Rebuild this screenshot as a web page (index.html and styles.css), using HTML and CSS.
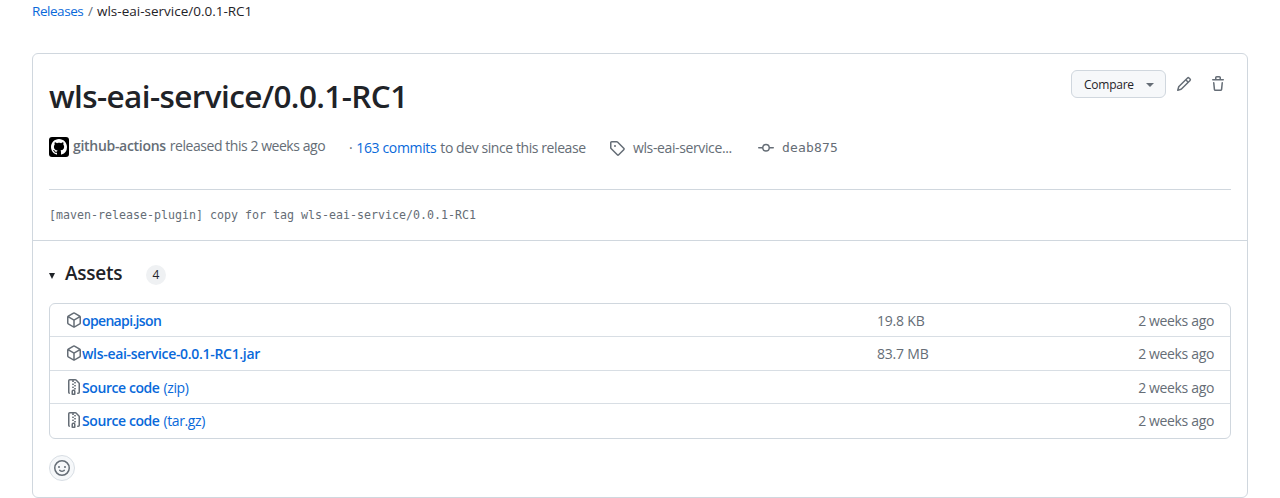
FILE: index.html
```html
<!DOCTYPE html>
<html lang="en">
<head>
<meta charset="utf-8">
<title>Release wls-eai-service/0.0.1-RC1</title>
<link rel="stylesheet" href="styles.css">
</head>
<body>
<svg width="0" height="0" class="sprite">
  <symbol id="package" viewBox="0 0 16 16"><path fill-rule="evenodd" d="M8.878.392a1.75 1.75 0 00-1.756 0l-5.25 3.045A1.75 1.75 0 001 4.951v6.098c0 .624.332 1.2.872 1.514l5.25 3.045a1.75 1.75 0 001.756 0l5.25-3.045c.54-.313.872-.89.872-1.514V4.951c0-.624-.332-1.2-.872-1.514L8.878.392zM7.875 1.69a.25.25 0 01.25 0l4.63 2.685L8 7.133 3.245 4.375l4.63-2.685zM2.5 5.677v5.372c0 .09.047.171.125.216l4.625 2.683V8.432L2.5 5.677zm6.25 8.271l4.625-2.683a.25.25 0 00.125-.216V5.677L8.75 8.432v5.516z"/></symbol>
  <symbol id="zip" viewBox="0 0 16 16"><path fill-rule="evenodd" d="M3.5 1.75a.25.25 0 01.25-.25h3a.75.75 0 000 1.5h.5a.75.75 0 000-1.5h2.086a.25.25 0 01.177.073l2.914 2.914a.25.25 0 01.073.177v8.586a.25.25 0 01-.25.25h-.5a.75.75 0 000 1.5h.5A1.75 1.75 0 0014 13.25V4.664c0-.464-.184-.909-.513-1.237L10.573.513A1.75 1.75 0 009.336 0H3.75A1.75 1.75 0 002 1.75v11.5c0 .649.353 1.214.874 1.515a.75.75 0 10.752-1.298.25.25 0 01-.126-.217V1.75zM8.75 3a.75.75 0 000 1.5h.5a.75.75 0 000-1.5h-.5zM6 5.250a.75.75 0 01.75-.75h.5a.75.75 0 010 1.5h-.5A.75.75 0 016 5.250zm2 1.500A.75.75 0 018.750 6h.5a.75.75 0 010 1.500h-.5A.75.75 0 018 6.750zm-1.250.750a.75.75 0 000 1.500h.5a.75.75 0 000-1.500h-.5zM8 9.750A.75.75 0 018.750 9h.5a.75.75 0 010 1.500h-.5A.75.75 0 018 9.750zm-.750.750a1.750 1.750 0 00-1.750 1.750v3c0 .414.336.750.750.750h2.500a.75.75 0 00.750-.750v-3a1.750 1.750 0 00-1.750-1.750h-.5zM7 12.250a.25.25 0 01.250-.250h.5a.25.25 0 01.250.250v2.250H7v-2.250z"/></symbol>
</svg>

<nav class="crumbs"><a class="link releases" href="#">Releases</a><span class="slash">/</span><span class="here">wls-eai-service/0.0.1-RC1</span></nav>

<main class="card">
  <section class="summary">
    <header class="head">
      <h1 class="title">wls-eai-service/0.0.1-RC1</h1>
      <div class="actions">
        <button class="compare"><span>Compare</span><i class="caret"></i></button>
        <svg class="icon pencil" viewBox="0 0 16 16"><path fill-rule="evenodd" d="M11.013 1.427a1.75 1.75 0 012.474 0l1.086 1.086a1.75 1.75 0 010 2.474l-8.610 8.610c-.210.210-.470.364-.756.445l-3.251.930a.75.75 0 01-.927-.928l.929-3.250a1.750 1.750 0 01.445-.758l8.610-8.610zm1.414 1.060a.25.25 0 00-.354 0L10.811 3.750l1.439 1.440 1.263-1.263a.25.25 0 000-.354l-1.086-1.086zM11.189 6.250L9.750 4.810l-6.286 6.287a.25.25 0 00-.064.108l-.558 1.953 1.953-.558a.249.249 0 00.108-.064l6.286-6.286z"/></svg>
        <svg class="icon trash" viewBox="0 0 16 16"><path fill-rule="evenodd" d="M6.500 1.750a.25.25 0 01.250-.250h2.500a.25.25 0 01.250.250V3h-3V1.750zm4.500 0V3h2.250a.75.75 0 010 1.500H2.750a.75.75 0 010-1.500H5V1.750C5 .784 5.784 0 6.750 0h2.500C10.216 0 11 .784 11 1.750zM4.496 6.675a.75.75 0 10-1.492.150l.660 6.600A1.750 1.750 0 005.405 15h5.190c.900 0 1.652-.681 1.741-1.576l.660-6.600a.75.75 0 00-1.492-.149l-.660 6.600a.25.25 0 01-.249.225h-5.190a.25.25 0 01-.249-.225l-.660-6.600z"/></svg>
      </div>
    </header>
    <div class="meta">
      <div class="author">
        <svg class="avatar" viewBox="0 0 20 20"><rect width="20" height="20" rx="3"/><path fill="#fff" transform="translate(2 2)" d="M8 0C3.580 0 0 3.580 0 8c0 3.540 2.290 6.530 5.470 7.590.400.070.550-.170.550-.380 0-.190-.010-.820-.010-1.490-2.010.370-2.530-.490-2.690-.940-.090-.230-.480-.940-.820-1.130-.280-.150-.680-.520-.010-.530.630-.010 1.080.580 1.230.820.720 1.210 1.870.870 2.330.660.070-.520.280-.870.510-1.070-1.780-.200-3.640-.890-3.640-3.950 0-.870.310-1.590.820-2.150-.080-.200-.360-1.020.080-2.120 0 0 .670-.210 2.200.820.640-.180 1.320-.270 2-.270.680 0 1.360.090 2 .270 1.530-1.040 2.200-.820 2.200-.820.440 1.100.160 1.920.080 2.120.510.560.820 1.270.820 2.150 0 3.070-1.870 3.750-3.650 3.950.290.250.540.730.540 1.480 0 1.070-.010 1.930-.010 2.200 0 .210.150.460.550.380A8.013 8.013 0 0016 8c0-4.420-3.580-8-8-8z"/></svg>
        <b class="who">github-actions</b><span class="when">released this 2 weeks ago</span>
      </div>
      <div class="since"><span class="dot">·</span><a class="link commits" href="#">163 commits</a><span class="todev">to dev since this release</span></div>
      <div class="tag"><svg class="icon" viewBox="0 0 16 16"><path fill-rule="evenodd" d="M2.500 7.775V2.750a.25.25 0 01.250-.250h5.025a.25.25 0 01.177.073l6.250 6.250a.25.25 0 010 .354l-5.025 5.025a.25.25 0 01-.354 0l-6.250-6.250a.25.25 0 01-.073-.177zm-1.500 0V2.750C1 1.784 1.784 1 2.750 1h5.025c.464 0 .910.184 1.238.513l6.250 6.250a1.750 1.750 0 010 2.474l-5.026 5.026a1.750 1.750 0 01-2.474 0l-6.250-6.250A1.750 1.750 0 011 7.775zM6 5a1 1 0 100 2 1 1 0 000-2z"/></svg><span class="tagname">wls-eai-service...</span></div>
      <div class="sha"><svg class="icon" viewBox="0 0 16 16"><path fill-rule="evenodd" d="M10.500 7.750a2.500 2.500 0 11-5 0 2.500 2.500 0 015 0zm1.430.750a4.002 4.002 0 01-7.860 0H.750a.75.75 0 110-1.500h3.320a4.001 4.001 0 017.860 0h3.320a.75.75 0 110 1.500h-3.320z"/></svg><code class="hash">deab875</code></div>
    </div>
    <pre class="notes">[maven-release-plugin] copy for tag wls-eai-service/0.0.1-RC1</pre>
  </section>

  <section class="assets">
    <div class="assets-head"><i class="triangle"></i><h2 class="assets-title">Assets</h2><span class="count">4</span></div>
    <ul class="list">
      <li class="row"><svg class="icon"><use href="#package"/></svg><a class="link name" href="#"><b class="n1">openapi.json</b></a><span class="size">19.8 KB</span><span class="age">2 weeks ago</span></li>
      <li class="row tall"><svg class="icon"><use href="#package"/></svg><a class="link name" href="#"><b class="n2">wls-eai-service-0.0.1-RC1.jar</b></a><span class="size">83.7 MB</span><span class="age">2 weeks ago</span></li>
      <li class="row"><svg class="icon"><use href="#zip"/></svg><a class="link name" href="#"><b class="n3">Source code</b><span class="ext">(zip)</span></a><span class="age">2 weeks ago</span></li>
      <li class="row tall"><svg class="icon"><use href="#zip"/></svg><a class="link name" href="#"><b class="n3">Source code</b><span class="ext">(tar.gz)</span></a><span class="age">2 weeks ago</span></li>
    </ul>
    <button class="react"><svg class="icon" viewBox="0 0 16 16"><path fill-rule="evenodd" d="M1.500 8a6.500 6.500 0 1113 0 6.500 6.500 0 01-13 0zM8 0a8 8 0 100 16A8 8 0 008 0zM5 8a1 1 0 100-2 1 1 0 000 2zm7-1a1 1 0 11-2 0 1 1 0 012 0zM5.320 9.636a.75.75 0 011.038.175l.007.009c.103.118.220.222.350.310.264.178.683.370 1.285.370.602 0 1.020-.192 1.285-.371.130-.088.247-.192.350-.310l.007-.008a.75.75 0 111.222.870l-.614-.431c.614.430.614.431.613.431v.001l-.001.002-.002.003-.005.007-.014.019a1.984 1.984 0 01-.184.213c-.160.166-.338.316-.530.445-.630.418-1.370.638-2.127.629-.946 0-1.652-.308-2.126-.630a3.320 3.320 0 01-.715-.657l-.014-.020-.005-.006-.002-.003v-.002h-.001l.613-.432-.614.430a.75.75 0 01.183-1.044z"/></svg></button>
  </section>
</main>
</body>
</html>
```
FILE: styles.css
```css
* { box-sizing: border-box; }

body {
  margin: 0;
  padding: 0 32px;
  height: 498px;
  overflow: hidden;
  background: #fff;
  color: #1f2328;
  font: 14px/20px "Open Sans", "Noto Sans", sans-serif;
}

b { font-weight: 600; }
button { font: inherit; color: inherit; padding: 0; }
.sprite { display: block; height: 0; }
.link { color: #0969da; text-decoration: none; }
.icon { width: 16px; height: 16px; flex: none; fill: #656d76; }

.crumbs {
  display: flex;
  height: 53px;
  padding-top: 1px;
  font-size: 13.5px;
  white-space: nowrap;
}
.releases { width: 51px; letter-spacing: -.45px; }
.slash { color: #656d76; width: 5px; margin: 0 4px 0 5px; }

.card {
  height: 445px;
  border: 1px solid #d0d7de;
  border-radius: 6px;
}

.summary {
  height: 187px;
  padding: 16px 16px 0;
  border-bottom: 1px solid #d0d7de;
}
.head { display: flex; justify-content: space-between; height: 61px; }
.title { margin: 2px 0 0; font-size: 31.5px; line-height: 48px; font-weight: 600; letter-spacing: -.6px; white-space: nowrap; }
.actions { display: flex; align-items: flex-start; }
.compare {
  display: flex;
  align-items: center;
  justify-content: space-between;
  width: 95px;
  height: 28px;
  padding: 1px 11px 0 12px;
  border: 1px solid #d0d7de;
  border-radius: 6px;
  background: #f6f8fa;
  font-size: 12px;
  letter-spacing: -.25px;
}
.caret { border: 4px solid transparent; border-top-color: #656d76; border-bottom: 0; }
.pencil { margin: 6px 0 0 10px; }
.trash { margin: 6px 5px 0 18px; }

.meta {
  display: flex;
  height: 59px;
  padding-top: 6px;
  border-bottom: 1px solid #d0d7de;
  color: #656d76;
  white-space: nowrap;
}
.author { display: flex; width: 300px; }
.avatar { width: 20px; height: 20px; margin-right: 4px; }
.who, .when { margin-top: -1px; }
.who { letter-spacing: -.3px; }
.when { margin-left: 4px; letter-spacing: -.45px; }
.since { display: flex; width: 260px; padding-top: 1px; letter-spacing: -.42px; }
.commits { margin: 0 4px; letter-spacing: -.35px; }
.tag { display: flex; align-items: center; gap: 8px; width: 149px; height: 20px; }
.tag .icon { margin-top: 2px; }
.tagname { padding-top: 1px; letter-spacing: -.38px; }
.sha { display: flex; align-items: center; gap: 8px; height: 20px; }
.sha .icon { margin-top: 2px; }
.hash { padding-top: 2px; font: 13px/20px "DejaVu Sans Mono", monospace; letter-spacing: .17px; }
.notes { margin: 15px 0 0; color: #656d76; font: 11.63px/20px "DejaVu Sans Mono", monospace; }

.assets { padding: 22px 16px 0; }
.assets-head { display: flex; align-items: center; height: 24px; }
.triangle { margin-top: 2px; border: 3.5px solid transparent; border-top: 6px solid #1f2328; border-bottom: 0; }
.assets-title { margin: -5px 0 0 10px; font-size: 19px; line-height: 24px; font-weight: 600; width: 81px; letter-spacing: -.25px; }
.count {
  width: 20px;
  height: 20px;
  border-radius: 10px;
  background: #eff1f3;
  font-size: 12px;
  text-align: center;
}
.list {
  margin: 16px 0 0;
  padding: 0;
  height: 136px;
  list-style: none;
  border: 1px solid #d0d7de;
  border-radius: 6px;
  color: #656d76;
}
.row { display: flex; height: 33px; padding: 7px 16px 0; white-space: nowrap; border-bottom: 1px solid #d8dee4; }
.row.tall { height: 34px; }
.row:last-child { border-bottom: 0; }
.row .icon { margin-top: 1px; }
.name { display: flex; flex: 0 0 795px; gap: 4px; }
.n1 { letter-spacing: -.65px; }
.n2 { letter-spacing: -.31px; }
.n3 { letter-spacing: -.42px; }
.ext { letter-spacing: -.4px; }
.size { letter-spacing: -.2px; }
.age { margin-left: auto; letter-spacing: -.35px; }
.react {
  display: grid;
  place-items: center;
  width: 26px;
  height: 26px;
  margin-top: 16px;
  border: 1px solid #d8dee4;
  border-radius: 50%;
  background: #f6f8fa;
}
```
